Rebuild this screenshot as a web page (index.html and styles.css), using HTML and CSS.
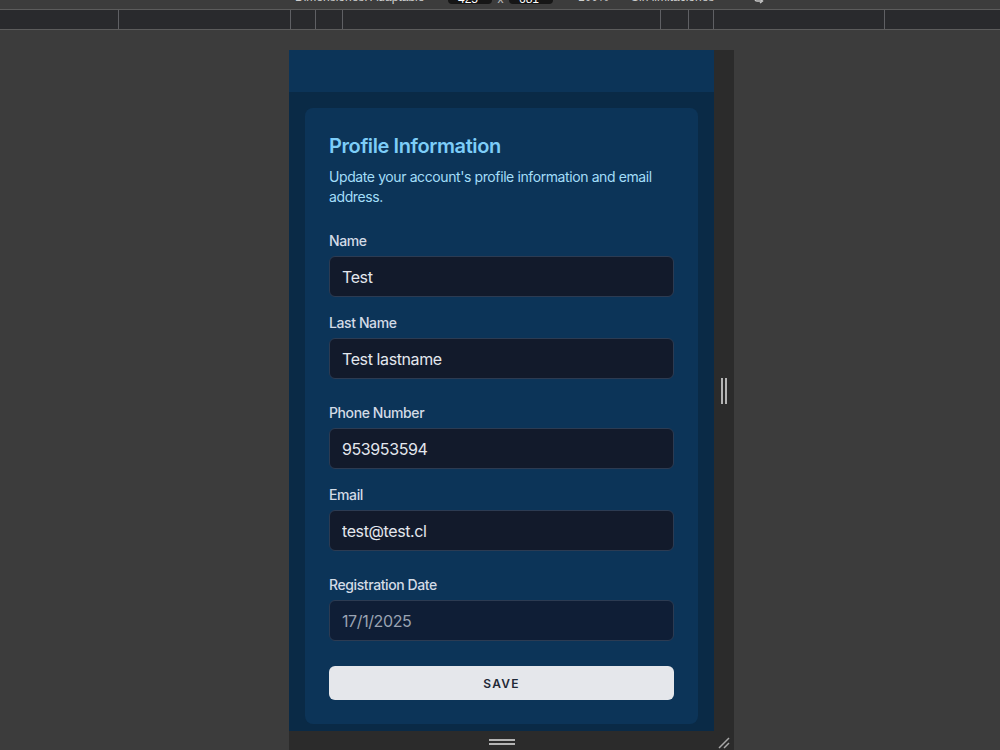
FILE: index.html
```html
<!DOCTYPE html>
<html>
<head>
    <meta charset="utf-8">
    <title>Profile</title>
    <link rel="stylesheet" href="styles.css">
</head>
<body>
    <div class="toolbar">
        <span class="tb-text tb-dims">Dimensiones: Adaptable</span>
        <span class="tb-box">425</span>
        <span class="tb-x">x</span>
        <span class="tb-box">681</span>
        <span class="tb-text tb-zoom">100%</span>
        <span class="tb-text tb-throttle">Sin limitaciones</span>
        <svg class="tb-rotate" width="12" height="10" viewBox="0 0 12 10">
            <path d="M2 -3 L2 2 Q2 4 4 4 L9 4" fill="none" stroke="#c8c8c8" stroke-width="1.4"/>
            <path d="M7 2 L9.5 4 L7 6" fill="none" stroke="#c8c8c8" stroke-width="1.4"/>
        </svg>
    </div>

    <div class="ruler">
        <div class="seg" style="width:118px"></div>
        <div class="seg tick" style="width:172px"></div>
        <div class="seg tick" style="width:25px"></div>
        <div class="seg tick" style="width:27px"></div>
        <div class="seg tick" style="width:318px"></div>
        <div class="seg tick" style="width:28px"></div>
        <div class="seg tick" style="width:25px"></div>
        <div class="seg tick" style="width:171px"></div>
        <div class="seg tick grow"></div>
    </div>

    <div class="canvas">
        <div class="device">
            <div class="device-row">
                <div class="screen">
                    <header class="app-header"></header>
                    <main class="page">
                        <section class="card">
                            <h2 class="card-title">Profile Information</h2>
                            <p class="card-desc">Update your account's profile information and email address.</p>

                            <form class="profile-form">
                                <div class="field mt-6">
                                    <label for="name">Name</label>
                                    <input type="text" id="name" value="Test">
                                </div>
                                <div class="field mt-4">
                                    <label for="last-name">Last Name</label>
                                    <input type="text" id="last-name" value="Test lastname">
                                </div>
                                <div class="field mt-6">
                                    <label for="phone">Phone Number</label>
                                    <input type="text" id="phone" value="953953594">
                                </div>
                                <div class="field mt-4">
                                    <label for="email">Email</label>
                                    <input type="text" id="email" value="test@test.cl">
                                </div>
                                <div class="field mt-6">
                                    <label for="reg-date">Registration Date</label>
                                    <input type="text" id="reg-date" class="disabled" value="17/1/2025" disabled>
                                </div>
                                <button type="button" class="save-btn">Save</button>
                            </form>
                        </section>
                    </main>
                </div>
                <div class="side-handle">
                    <span class="grip-v"></span>
                </div>
            </div>
            <div class="bottom-bar">
                <div class="bottom-grip"><span class="grip-h"></span></div>
                <div class="corner">
                    <svg width="14" height="14" viewBox="0 0 14 14">
                        <path d="M2 12 L12 2 M7 12 L12 7" stroke="#a8a8a8" stroke-width="1.5"/>
                    </svg>
                </div>
            </div>
        </div>
    </div>
</body>
</html>
```

FILE: styles.css
```css
* {
    box-sizing: border-box;
}
body {
    margin: 0;
    background: #3c3c3c;
    font-family: Inter, "Noto Sans", sans-serif;
    letter-spacing: -0.025em;
    overflow: hidden;
    height: 750px;
}

/* devtools toolbar (cut at top) */
.toolbar {
    height: 10px;
    display: flex;
    padding-left: 295px;
    overflow: hidden;
    border-bottom: 1px solid #5c5c5c;
    background: #3c3c3c;
    letter-spacing: 0;
}
.tb-text {
    font-family: "Liberation Sans", sans-serif;
    font-size: 12px;
    line-height: 12px;
    margin-top: -9px;
    color: #cfcfcf;
}
.tb-dims {
    width: 153px;
}
.tb-box {
    width: 44px;
    height: 20px;
    margin-top: -16px;
    border-radius: 4px;
    background: #161616;
    color: #ffffff;
    font-family: "Liberation Sans", sans-serif;
    font-size: 12px;
    line-height: 12px;
    padding: 9px 0 0 10px;
}
.tb-x {
    width: 17px;
    text-align: center;
    font-family: "Liberation Sans", sans-serif;
    font-size: 12px;
    line-height: 12px;
    margin-top: -7px;
    color: #bdbdbd;
}
.tb-zoom {
    margin-left: 25px;
    width: 53px;
}
.tb-throttle {
    width: 122px;
}
.tb-rotate {
    margin-top: -3px;
}

/* ruler */
.ruler {
    display: flex;
    height: 20px;
    background: #292a2d;
    border-bottom: 1px solid #5c5c5c;
}
.seg {
    height: 100%;
}
.seg.tick {
    border-left: 1px solid #5f6064;
}
.seg.grow {
    flex: 1;
}

/* emulated device */
.canvas {
    padding: 20px 0 0 289px;
}
.device {
    width: 445px;
}
.device-row {
    display: flex;
}
.screen {
    width: 425px;
    height: 681px;
    overflow: hidden;
    background: #0a2a46;
}
.side-handle {
    width: 20px;
    background: #2b2b2b;
    display: flex;
    align-items: center;
    justify-content: center;
}
.grip-v {
    width: 6px;
    height: 26px;
    border-left: 2px solid #b4b4b4;
    border-right: 2px solid #b4b4b4;
}
.bottom-bar {
    display: flex;
    height: 22px;
    background: #2b2b2b;
}
.bottom-grip {
    width: 425px;
    display: flex;
    justify-content: center;
    padding-top: 8px;
}
.grip-h {
    width: 26px;
    height: 6px;
    border-top: 2px solid #b4b4b4;
    border-bottom: 2px solid #b4b4b4;
}
.corner {
    padding: 3px 0 0 3px;
}

/* app */
.app-header {
    height: 42px;
    background: #0c3458;
}
.page {
    padding: 16px;
}
.card {
    background: #0c3458;
    border-radius: 8px;
    padding: 24px;
}
.card-title {
    margin: 0;
    font-size: 20px;
    line-height: 28px;
    font-weight: 600;
    color: #7dcdf8;
}
.card-desc {
    margin: 7px 0 0;
    font-size: 14px;
    line-height: 20px;
    color: #a3def9;
}
.mt-4 {
    margin-top: 16px;
}
.mt-6 {
    margin-top: 24px;
}
.field label {
    display: block;
    font-size: 14px;
    line-height: 20px;
    font-weight: 500;
    color: #d3dbe6;
    margin-bottom: 5px;
}
.field input {
    display: block;
    width: 100%;
    height: 41px;
    padding: 0 12px;
    font-family: inherit;
    font-size: 16px;
    letter-spacing: -0.025em;
    color: #e3e7ee;
    background: #121a2b;
    border: 1px solid #2c3b52;
    border-radius: 6px;
    outline: none;
}
.field input.disabled {
    background: #0f1e36;
    color: #9aa3b2;
}
.save-btn {
    display: block;
    width: 100%;
    margin-top: 25px;
    height: 34px;
    border: none;
    border-radius: 6px;
    background: #e5e7eb;
    color: #1f2937;
    font-family: inherit;
    font-size: 12px;
    font-weight: 600;
    letter-spacing: 0.1em;
    text-transform: uppercase;
    cursor: pointer;
}
```
